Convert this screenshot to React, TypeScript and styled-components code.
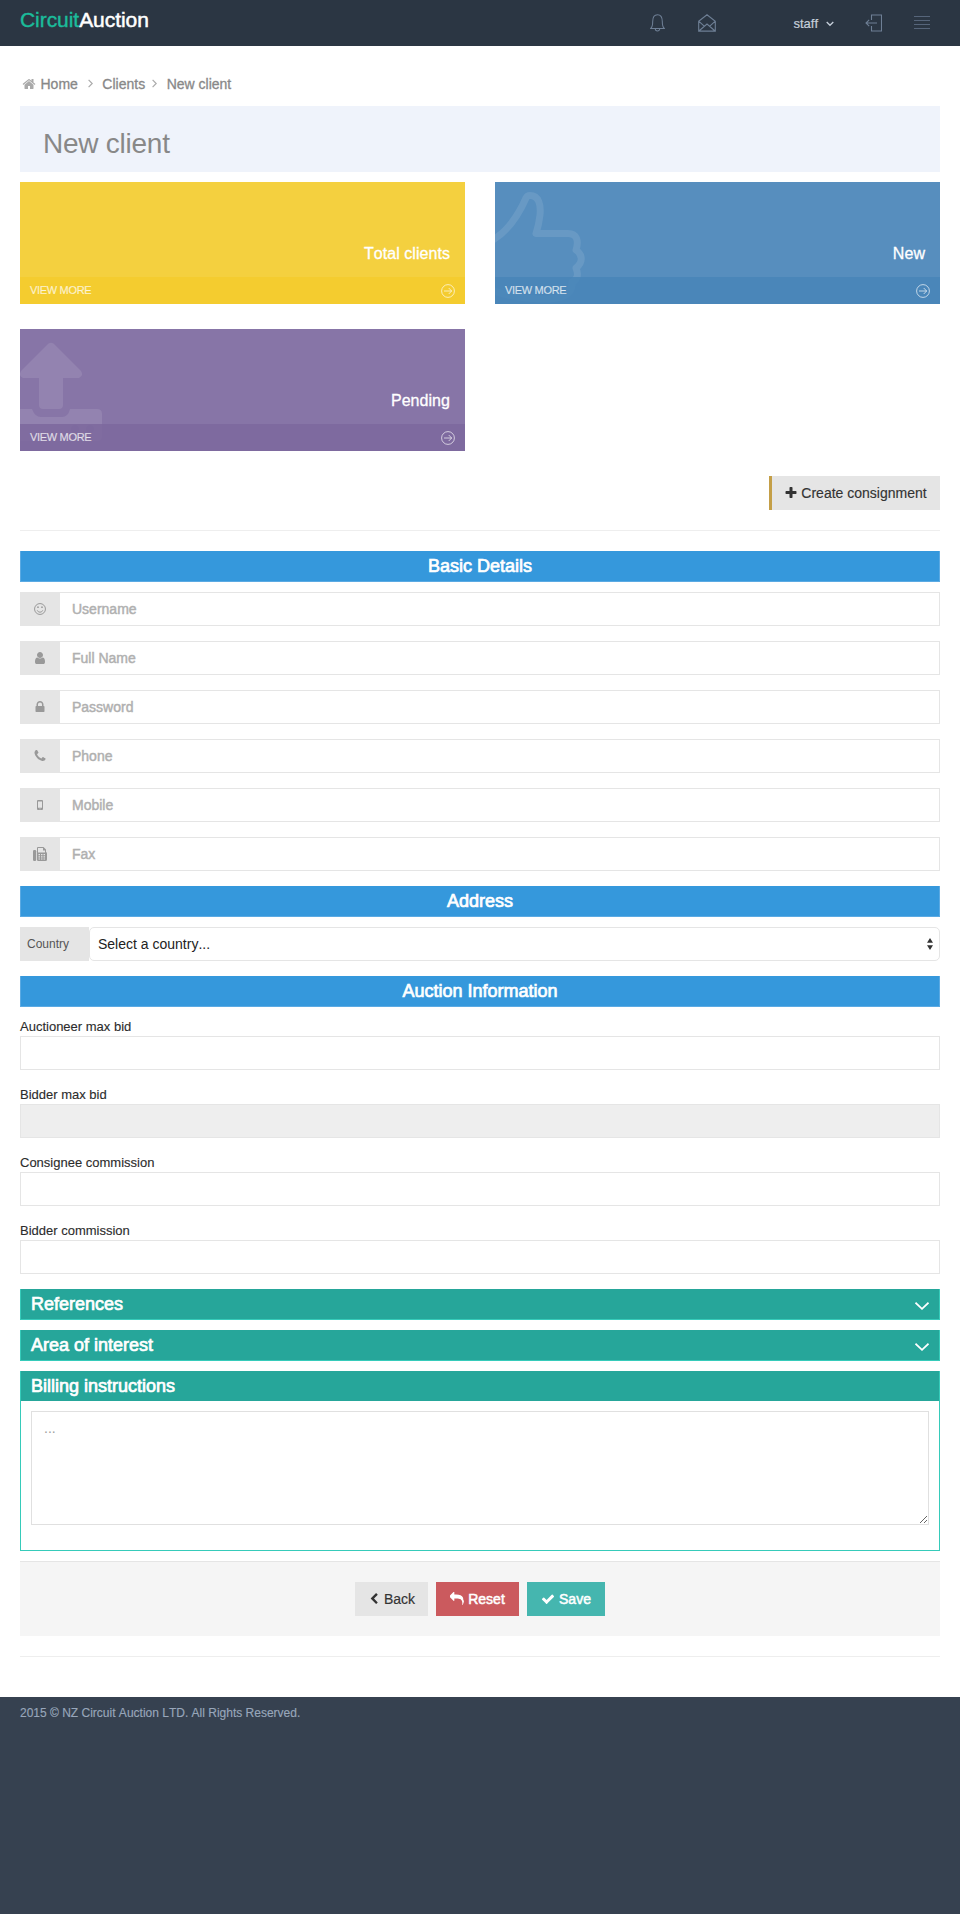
import React from "react";
import styled, { createGlobalStyle } from "styled-components";

const Global = createGlobalStyle`
  *, *::before, *::after { box-sizing: border-box; }
  body {
    margin: 0;
    background: #fff;
    color: #333;
    font-family: "Liberation Sans", Arial, sans-serif;
    font-size: 14px;
    font-kerning: none;
  }
  button, input, select, textarea { font-family: inherit; font-kerning: none; margin: 0; border-radius: 0; outline: 0; }
  svg { display: block; flex: none; }
`;

const Header = styled.header`
  height: 46px;
  padding: 0 20px;
  display: flex;
  align-items: flex-start;
  background: #2b3643;
`;
const Logo = styled.div`
  flex: 1;
  font-size: 21px;
  line-height: 24px;
  padding-top: 8px;
  color: #fff;
  -webkit-text-stroke: 0.5px currentColor;
  letter-spacing: -0.05px;
  span { color: #1bbc9b; -webkit-text-stroke: 0.4px currentColor; }
`;
const TopMenu = styled.nav`
  height: 46px;
  display: flex;
  align-items: center;
  color: #6e7f95;
`;
const MenuIcon = styled.div<{ $gap: number }>`
  margin-right: ${(p) => p.$gap}px;
`;
const UserMenu = styled.div`
  display: flex;
  align-items: center;
  gap: 8px;
  margin-right: 31px;
  font-size: 13px;
  line-height: 16px;
  color: #c6cfda;
  padding-top: 1px;
  -webkit-text-stroke: 0.2px currentColor;
`;

const Main = styled.main`
  padding: 0 20px 20px;
`;
const Breadcrumb = styled.div`
  height: 60px;
  padding: 16px 0 1px 2px;
  display: flex;
  align-items: center;
  color: #888;
  -webkit-text-stroke: 0.3px currentColor;
  svg { color: #aaa; }
`;
const Crumb = styled.span<{ $left: number; $right?: number }>`
  margin: 0 ${(p) => p.$right ?? 0}px 0 ${(p) => p.$left}px;
`;
const Title = styled.h1`
  margin: 0 0 10px;
  height: 66px;
  padding: 9px 0 0 23px;
  display: flex;
  align-items: center;
  font-size: 28px;
  line-height: 32px;
  font-weight: 400;
  letter-spacing: -0.25px;
  color: #888;
  background: #eff3fb;
`;
const Tiles = styled.section`
  display: grid;
  grid-template-columns: 1fr 1fr;
  gap: 25px 30px;
`;
const TileBox = styled.div<{ $bg: string }>`
  position: relative;
  height: 122px;
  overflow: hidden;
  display: flex;
  flex-direction: column;
  color: #fff;
  background: ${(p) => p.$bg};
`;
const TileArt = styled.svg`
  position: absolute;
  left: 0;
  top: 0;
`;
const TileLabel = styled.div`
  position: relative;
  height: 95px;
  padding: 62px 15px 0 0;
  text-align: right;
  font-size: 16px;
  line-height: 20px;
  letter-spacing: 0.05px;
  -webkit-text-stroke: 0.3px currentColor;
`;
const TileMore = styled.div<{ $bg: string }>`
  position: relative;
  height: 27px;
  padding: 0 10px;
  display: flex;
  align-items: center;
  justify-content: space-between;
  font-size: 11px;
  line-height: 12px;
  letter-spacing: -0.32px;
  color: rgba(255, 255, 255, 0.7);
  -webkit-text-stroke: 0.2px currentColor;
  background: ${(p) => p.$bg};
  span { padding-bottom: 2px; }
`;

const Toolbar = styled.div`
  margin-top: 25px;
  display: flex;
  justify-content: flex-end;
`;
const Button = styled.button<{ $bg: string; $color: string; $stroke?: boolean; $width: number }>`
  width: ${(p) => p.$width}px;
  height: 34px;
  padding: 0;
  border: 0;
  display: flex;
  align-items: center;
  justify-content: center;
  gap: 4px;
  font-size: 14px;
  line-height: 20px;
  color: ${(p) => p.$color};
  background: ${(p) => p.$bg};
  -webkit-text-stroke: ${(p) => (p.$stroke ? "0.5px currentColor" : "0.15px currentColor")};
`;
const AccentButton = styled(Button)`
  border-left: 3px solid #c49f47;
  padding-right: 1px;
  gap: 3px;
`;
const Rule = styled.hr`
  margin: 20px 0;
  border: 0;
  height: 1px;
  background: #eee;
`;

const Band = styled.h4<{ $spaced?: boolean }>`
  margin: ${(p) => (p.$spaced ? "15px" : "0")} 0 0;
  height: 31px;
  border: 1px solid #5baae3;
  border-top: 0;
  background: #3598dc;
  color: #fff;
  font-size: 18px;
  line-height: 30px;
  font-weight: 400;
  text-align: center;
  -webkit-text-stroke: 0.7px currentColor;
`;
const Fields = styled.div`
  display: grid;
  gap: 15px;
  margin-top: 10px;
`;
const Group = styled.label`
  display: flex;
  height: 34px;
`;
const Addon = styled.span<{ $text?: boolean }>`
  width: ${(p) => (p.$text ? 69 : 40)}px;
  padding-left: ${(p) => (p.$text ? 7 : 0)}px;
  display: flex;
  align-items: center;
  justify-content: ${(p) => (p.$text ? "flex-start" : "center")};
  background: #e5e5e5;
  color: ${(p) => (p.$text ? "#555" : "#999")};
  font-size: 12px;
`;
const Input = styled.input`
  flex: 1;
  display: block;
  width: 100%;
  height: 34px;
  padding: 0 12px 1px;
  border: 1px solid #e5e5e5;
  font-size: 14px;
  background: #fff;
  &:disabled { background: #eee; }
  &::placeholder { color: #b0b0b0; opacity: 1; -webkit-text-stroke: 0.45px currentColor; }
`;
const IconInput = styled(Input)`
  border-left: 0;
`;
const SelectWrap = styled.span`
  flex: 1;
  position: relative;
  svg { position: absolute; right: 7px; top: 11px; pointer-events: none; }
`;
const Select = styled.select`
  appearance: none;
  width: 100%;
  height: 34px;
  padding: 0 8px 1px;
  border: 1px solid #e5e5e5;
  border-radius: 5px;
  background: #fff;
  color: #222;
  font-size: 14px;
`;
const Stack = styled.div`
  padding-top: 10px;
  display: grid;
  gap: 15px;
`;
const Labelled = styled.label`
  display: block;
  font-size: 13px;
  line-height: 19px;
  color: #2c2c2c;
  -webkit-text-stroke: 0.12px currentColor;
`;

const Panel = styled.section<{ $gap: number }>`
  margin-top: ${(p) => p.$gap}px;
  border: 1px solid #36cbba;
  border-top: 0;
`;
const PanelHead = styled.h4`
  margin: 0;
  height: 30px;
  padding: 0 10px;
  display: flex;
  align-items: center;
  justify-content: space-between;
  background: #26a69a;
  color: #fff;
  font-size: 18px;
  line-height: 30px;
  font-weight: 400;
  -webkit-text-stroke: 0.7px currentColor;
  svg { margin-top: 3px; }
`;
const PanelBody = styled.div`
  padding: 10px 10px 25px;
`;
const TextArea = styled.textarea`
  display: block;
  width: 100%;
  height: 114px;
  padding: 6px 12px;
  border: 1px solid #e0e0e0;
  font-size: 14px;
  line-height: 20px;
  resize: vertical;
  &::placeholder { color: #a0a0a0; opacity: 1; }
`;
const Actions = styled.div`
  margin-top: 10px;
  height: 75px;
  padding-top: 20px;
  display: flex;
  justify-content: center;
  gap: 8px;
  border-top: 1px solid #e5e5e5;
  background: #f5f5f5;
`;
const Footer = styled.footer`
  height: 217px;
  padding: 8px 20px 0;
  background: #364150;
  color: #98a6ba;
  font-size: 12px;
  line-height: 16px;
  -webkit-text-stroke: 0.15px currentColor;
`;

const glyphs = {
  home: "M1472 992v480q0 26-19 45t-45 19h-384v-384h-256v384h-384q-26 0-45-19t-19-45v-480q0-1 .5-3t.5-3l575-474 575 474q1 2 1 6zm223-69l-62 74q-8 9-21 11h-3q-13 0-21-7l-692-577-692 577q-12 8-24 7-13-2-21-11l-62-74q-8-10-7-23.5t11-21.5l719-599q32-26 76-26t76 26l244 204v-195q0-14 9-23t23-9h192q14 0 23 9t9 23v408l219 182q10 8 11 21.5t-7 23.5z",
  user: "M1536 1399q0 109-62.5 187t-150.5 78h-854q-88 0-150.5-78t-62.5-187q0-85 8.5-160.5t31.5-152 58.5-131 94-89 134.5-34.5q131 128 313 128t313-128q76 0 134.5 34.5t94 89 58.5 131 31.5 152 8.5 160.5zm-256-887q0 159-112.5 271.5t-271.5 112.5-271.5-112.5-112.5-271.5 112.5-271.5 271.5-112.5 271.5 112.5 112.5 271.5z",
  lock: "M640 768h512v-192q0-106-75-181t-181-75-181 75-75 181v192zm832 96v576q0 40-28 68t-68 28h-960q-40 0-68-28t-28-68v-576q0-40 28-68t68-28h32v-192q0-184 132-316t316-132 316 132 132 316v192h32q40 0 68 28t28 68z",
  phone: "M1600 1240q0 27-10 70.5t-21 68.5q-21 50-122 106-94 51-186 51-27 0-53-3.5t-57.5-12.5-47-14.5-55.5-20.5-49-18q-98-35-175-83-127-79-264-216t-216-264q-48-77-83-175-3-9-18-49t-20.5-55.5-14.5-47-12.5-57.5-3.5-53q0-92 51-186 56-101 106-122 25-11 68.5-21t70.5-10q14 0 21 3 18 6 53 76 11 19 30 54t35 63.5 31 53.5q3 4 17.5 25t21.5 35.5 7 28.5q0 20-28.5 50t-62 55-62 53-28.5 46q0 9 5 22.5t8.5 20.5 14 24 11.5 19q76 137 174 235t235 174q2 1 19 11.5t24 14 20.5 8.5 22.5 5q18 0 46-28.5t53-62 55-62 50-28.5q14 0 28.5 7t35.5 21.5 25 17.5q25 15 53.5 31t63.5 35 54 30q70 35 76 53 3 7 3 21z",
  plus: "M1600 736v192q0 40-28 68t-68 28h-416v416q0 40-28 68t-68 28h-192q-40 0-68-28t-28-68v-416h-416q-40 0-68-28t-28-68v-192q0-40 28-68t68-28h416v-416q0-40 28-68t68-28h192q40 0 68 28t28 68v416h416q40 0 68 28t28 68z",
  check: "M1671 566q0 40-28 68l-724 724-136 136q-28 28-68 28t-68-28l-136-136-362-362q-28-28-28-68t28-68l136-136q28-28 68-28t68 28l294 295 656-657q28-28 68-28t68 28l136 136q28 28 28 68z",
  reply: "M1792 1120q0 166-127 451-3 7-10.5 24t-13.5 30-13 22q-12 17-28 17-15 0-23.5-10t-8.5-25q0-9 2.5-26.5t2.5-23.5q5-68 5-123 0-112-19.5-200.5t-54-153.5-89-112-117-79-147.5-49-172-26-200-7.5h-224v256q0 26-19 45t-45 19-45-19l-512-512q-19-19-19-45t19-45l512-512q19-19 45-19t45 19 19 45v256h224q713 0 875 403 53 134 53 333z",
  back: "M1427 301l-531 531 531 531q19 19 19 45t-19 45l-166 166q-19 19-45 19t-45-19l-742-742q-19-19-19-45t19-45l742-742q19-19 45-19t45 19l166 166q19 19 19 45t-19 45z",
};

const Glyph = ({ name, size = 14 }: { name: keyof typeof glyphs; size?: number }) => (
  <svg width={size} height={size} viewBox="0 0 1792 1792" fill="currentColor" stroke="none">
    <path d={glyphs[name]} />
  </svg>
);
const Smile = () => (
  <svg width="12" height="12" viewBox="0 0 12 12" fill="none" stroke="currentColor">
    <circle cx="6" cy="6" r="5.45" />
    <path d="M3.2 7.3a3 3 0 0 0 5.6 0" />
    <circle cx="4" cy="4.2" r=".85" fill="currentColor" stroke="none" />
    <circle cx="8" cy="4.2" r=".85" fill="currentColor" stroke="none" />
  </svg>
);
const Mobile = () => (
  <svg width="6" height="10" viewBox="0 0 6 10" fill="currentColor">
    <path fillRule="evenodd" d="M1 0h4a1 1 0 0 1 1 1v8a1 1 0 0 1-1 1H1a1 1 0 0 1-1-1V1a1 1 0 0 1 1-1zM1 1.500v6.300h4V1.500zM2.500 8.500v.8h1v-.8z" />
  </svg>
);
const Fax = () => (
  <svg width="14" height="14" viewBox="0 0 14 14" fill="currentColor">
    <rect x="0" y="3" width="3.2" height="11" rx="1.2" />
    <path fillRule="evenodd" d="M4 1a1 1 0 0 1 1-1h5.5L13 2.6V5a1.5 1.5 0 0 1 1 1.4v6.1a1.5 1.5 0 0 1-1.500 1.500H5.300A1.300 1.300 0 0 1 4 12.700zM5 1v4.500h7V3.500H10V1zM5.500 7v1.300h1.500V7zM8 7v1.300h1.500V7zM10.500 7v1.300H12V7zM5.500 9.200v1.300h1.500V9.200zM8 9.200v1.300h1.500V9.200zM10.500 9.200v1.300H12V9.200zM5.500 11.400v1.200h1.500v-1.200zM8 11.400v1.200h1.500v-1.200zM10.500 11.400v1.200H12v-1.200z" />
  </svg>
);
const Angle = () => (
  <svg width="5" height="9" viewBox="0 0 5 9" fill="none" stroke="currentColor" strokeWidth="1.200">
    <path d="M.6.9l3.600 3.600L.6 8.100" />
  </svg>
);
const Chevron = () => (
  <svg width="14" height="8" viewBox="0 0 14 8" fill="none" stroke="#fff" strokeWidth="1.700">
    <path d="M.5.7L7 6.800 13.500.7" />
  </svg>
);
const CircleArrow = () => (
  <svg width="14" height="14" viewBox="0 0 14 14" fill="none" stroke="currentColor" strokeWidth=".95">
    <circle cx="7" cy="7" r="6.400" />
    <path d="M3 7h7.600M7.700 4l3 3-3 3" />
  </svg>
);

const ThumbArt = () => (
  <TileArt width="100" height="122" viewBox="0 0 100 122" fill="none" stroke="#fff" strokeOpacity=".1" strokeWidth="7" strokeLinejoin="round">
    <path d="M-4 59C12 50 24 32 31 16Q32 13.500 35 13.500C44 13.500 46 23 45 33Q44 42 41 51.500H73C82 51.500 84 59 81 68C88 73 88 80 81 86C84 93 82 98 77 100C78 112 68 117 50 117C30 117 15 115-4 108" />
  </TileArt>
);
const UploadArt = () => (
  <TileArt width="100" height="122" viewBox="0 0 100 122" fill="#fff" fillOpacity=".1">
    <path d="M28.500 14.500q2.500-1.500 5 0L61 42q3 5-2 7H43v27q0 4-4 4H23q-4 0-4-4V49H3q-5-2-2-7z" />
    <path fillRule="evenodd" d="M-20 80H12q3 8 9 8H42q6 0 8-8h27q5 0 5 5v22q0 5-5 5H-20zM55 96a4 4 0 1 0 0 8 4 4 0 0 0 0-8zM70 96a4 4 0 1 0 0 8 4 4 0 0 0 0-8z" />
  </TileArt>
);

const Tile = ({ label, bg, footer, art }: { label: string; bg: string; footer: string; art?: React.ReactNode }) => (
  <TileBox $bg={bg}>
    {art}
    <TileLabel>{label}</TileLabel>
    <TileMore $bg={footer}>
      <span>VIEW MORE</span>
      <CircleArrow />
    </TileMore>
  </TileBox>
);

const basics: [string, React.ReactNode][] = [
  ["Username", <Smile />],
  ["Full Name", <Glyph name="user" />],
  ["Password", <Glyph name="lock" />],
  ["Phone", <Glyph name="phone" />],
  ["Mobile", <Mobile />],
  ["Fax", <Fax />],
];

export default function App() {
  return (
    <>
      <Global />
      <Header>
        <Logo><span>Circuit</span>Auction</Logo>
        <TopMenu>
          <MenuIcon $gap={33}>
            <svg width="15" height="18" viewBox="0 0 15 18" fill="none" stroke="currentColor" strokeWidth="1.050">
              <path d="M.7 14.500C2.600 12.800 2.700 11 2.700 7.500C2.700 3 4.500.7 7.500.7s4.800 2.300 4.800 6.800c0 3.500.1 5.300 2 7zM5.300 14.700a2.200 2.200 0 0 0 4.400 0" />
            </svg>
          </MenuIcon>
          <MenuIcon $gap={77}>
            <svg width="18" height="18" viewBox="0 0 18 18" fill="none" stroke="currentColor" strokeWidth="1.100">
              <path d="M.7 7.200L9 .8l8.300 6.400v9.900H.7zM.7 7.200l5.500 5M17.300 7.200l-5.500 5M.9 17l8.100-7 8.100 7" />
            </svg>
          </MenuIcon>
          <UserMenu>
            staff
            <svg width="8" height="6" viewBox="0 0 8 6" fill="none" stroke="currentColor" strokeWidth="1.300">
              <path d="M.7 1L4 4.300 7.300 1" />
            </svg>
          </UserMenu>
          <MenuIcon $gap={32}>
            <svg width="17" height="18" viewBox="0 0 17 18" fill="none" stroke="currentColor" strokeWidth="1.100">
              <path d="M6.500 6V1h10v16h-10v-5M12 9H1M4.200 5.800L1 9l3.200 3.200" />
            </svg>
          </MenuIcon>
          <MenuIcon $gap={10}>
            <svg width="16" height="14" viewBox="0 0 16 14" stroke="#56657a">
              <path d="M0 .5h16M0 4.500h16M0 8.500h16M0 12.500h16" />
            </svg>
          </MenuIcon>
        </TopMenu>
      </Header>

      <Main>
        <Breadcrumb>
          <Glyph name="home" />
          <Crumb $left={4.500} $right={10}>Home</Crumb>
          <Angle />
          <Crumb $left={9.500} $right={7}>Clients</Crumb>
          <Angle />
          <Crumb $left={9.500}>New client</Crumb>
        </Breadcrumb>
        <Title>New client</Title>

        <Tiles>
          <Tile label="Total clients" bg="#f4d03f" footer="rgba(243, 203, 45, 0.85)" />
          <Tile label="New" bg="#578ebe" footer="rgba(72, 133, 184, 0.85)" art={<ThumbArt />} />
          <Tile label="Pending" bg="#8775a7" footer="rgba(125, 105, 157, 0.85)" art={<UploadArt />} />
        </Tiles>

        <Toolbar>
          <AccentButton $bg="#e5e5e5" $color="#333" $width={171}>
            <Glyph name="plus" />
            Create consignment
          </AccentButton>
        </Toolbar>
        <Rule />

        <Band>Basic Details</Band>
        <Fields>
          {basics.map(([name, icon]) => (
            <Group key={name}>
              <Addon>{icon}</Addon>
              <IconInput placeholder={name} />
            </Group>
          ))}
        </Fields>

        <Band $spaced>Address</Band>
        <Fields>
          <Group>
            <Addon $text>Country</Addon>
            <SelectWrap>
              <Select>
                <option>Select a country...</option>
              </Select>
              <svg width="6" height="12" viewBox="0 0 6 12" fill="#333">
                <path d="M0 4.800L3 0l3 4.800zM0 7.200h6L3 12z" />
              </svg>
            </SelectWrap>
          </Group>
        </Fields>

        <Band $spaced>Auction Information</Band>
        <Stack>
          <Labelled>Auctioneer max bid<Input /></Labelled>
          <Labelled>Bidder max bid<Input disabled /></Labelled>
          <Labelled>Consignee commission<Input /></Labelled>
          <Labelled>Bidder commission<Input /></Labelled>
        </Stack>

        <Panel $gap={15}>
          <PanelHead>References<Chevron /></PanelHead>
        </Panel>
        <Panel $gap={10}>
          <PanelHead>Area of interest<Chevron /></PanelHead>
        </Panel>
        <Panel $gap={10}>
          <PanelHead>Billing instructions</PanelHead>
          <PanelBody>
            <TextArea placeholder="..." />
          </PanelBody>
        </Panel>

        <Actions>
          <Button $bg="#e5e5e5" $color="#333" $width={73}><Glyph name="back" size={12} />Back</Button>
          <Button $bg="#cb5a5e" $color="#fff" $width={83} $stroke><Glyph name="reply" />Reset</Button>
          <Button $bg="#45b6af" $color="#fff" $width={78} $stroke><Glyph name="check" />Save</Button>
        </Actions>
        <Rule />
      </Main>
      <Footer>2015 © NZ Circuit Auction LTD. All Rights Reserved.</Footer>
    </>
  );
}
